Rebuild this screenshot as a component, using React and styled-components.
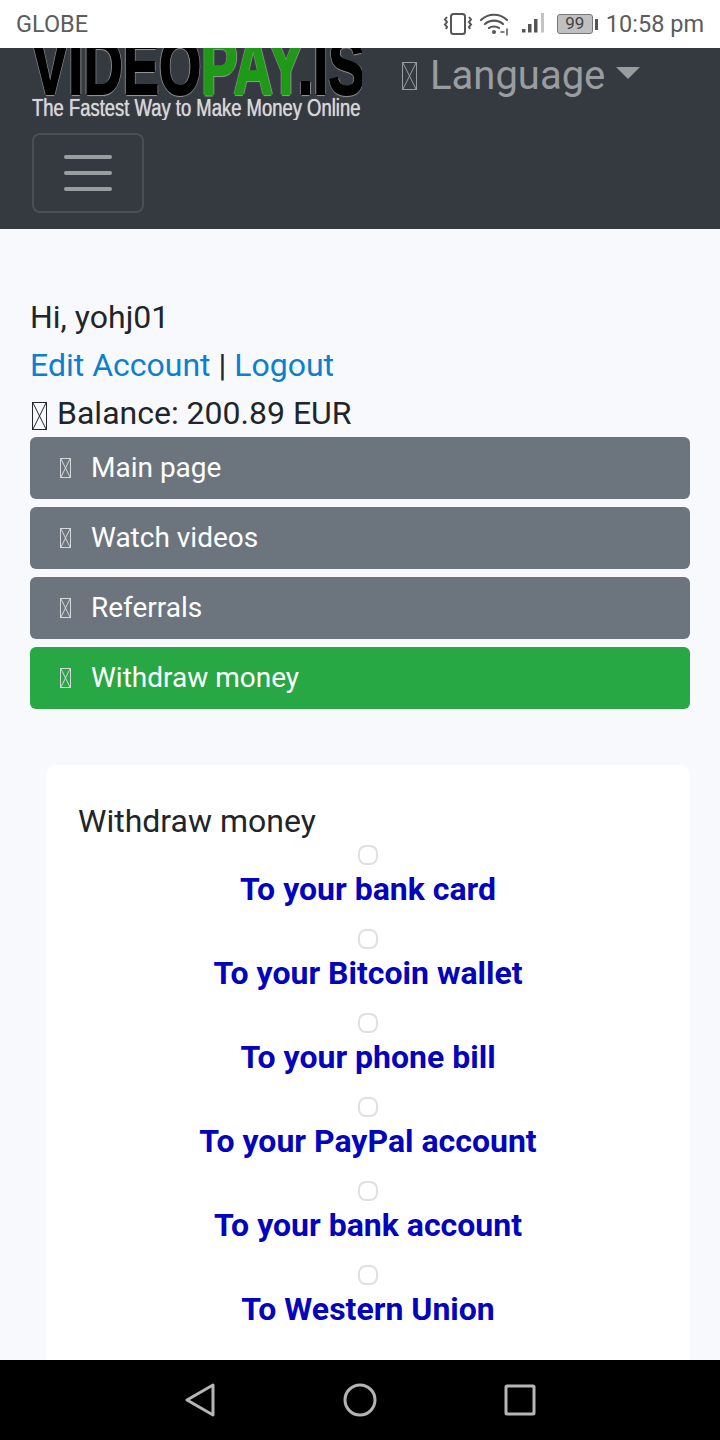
import React from "react";
import styled, { createGlobalStyle } from "styled-components";

const GlobalStyle = createGlobalStyle`
  html, body { margin: 0; padding: 0; background: #000; }
  * { box-sizing: border-box; }
`;

const menuItems = [
  { label: "Main page" },
  { label: "Watch videos" },
  { label: "Referrals" },
  { label: "Withdraw money", active: true },
];

const withdrawOptions = [
  "To your bank card",
  "To your Bitcoin wallet",
  "To your phone bill",
  "To your PayPal account",
  "To your bank account",
  "To Western Union",
];

// missing-glyph box, the icon font did not load in the original
const Tofu = ({ w, h, color }) => (
  <svg width={w} height={h} viewBox={`0 0 ${w} ${h}`} fill="none" stroke={color} strokeWidth="1">
    <rect x="0.5" y="0.5" width={w - 1} height={h - 1} />
    <path d={`M1 1L${w - 1} ${h - 1}M${w - 1} 1L1 ${h - 1}`} />
  </svg>
);

const App = () => (
  <Screen>
    <GlobalStyle />
    <StatusBar>
      <Carrier>GLOBE</Carrier>
      <StatusRight>
        <svg width="30" height="24" viewBox="0 0 30 24" fill="none" stroke="#555" strokeWidth="2">
          <rect x="8" y="2" width="14" height="20" rx="2.5" />
          <path d="M4 5l-2 2.500 2 2.500-2 2.500 2 2.500 -1 2M26 5l2 2.500-2 2.500 2 2.500-2 2.500 1 2" strokeWidth="2" />
        </svg>
        <svg width="32" height="24" viewBox="0 0 32 24" fill="none" stroke="#555" strokeWidth="2.200" strokeLinecap="round">
          <path d="M2 8C9 1 21 1 28 8M6 12c5-4.500 13-4.500 18 0M10 16c2.500-2 7.500-2 10 0" />
          <circle cx="15" cy="20" r="2" fill="#555" stroke="none" />
          <path d="M22 20h3M28 17v6" strokeWidth="1.500" />
        </svg>
        <SignalIcon width="24" height="24" viewBox="0 0 24 24" fill="#555">
          <rect x="1" y="17" width="3.500" height="3.500" />
          <rect x="7" y="12" width="3.500" height="8.500" />
          <rect x="13" y="7" width="3.500" height="13.500" />
          <rect x="20" y="1" width="3" height="19.500" fill="#c4c4c4" />
        </SignalIcon>
        <Battery>
          <BatteryBody>99</BatteryBody>
          <BatteryTip />
        </Battery>
        <Clock>10:58 pm</Clock>
      </StatusRight>
    </StatusBar>

    <Main>
      <Navbar>
        <NavTop>
          <Logo>
            <LogoWord>
              VIDEO<LogoGreen>PAY</LogoGreen>.IS
            </LogoWord>
            <LogoTagline>The Fastest Way to Make Money Online</LogoTagline>
          </Logo>
          <LanguageLink>
            <Tofu w={15} h={28} color="#9a9da0" />
            <span>Language</span>
            <Caret />
          </LanguageLink>
        </NavTop>
        <Toggler>
          <TogglerBar />
          <TogglerBar />
          <TogglerBar />
        </Toggler>
      </Navbar>

      <Content>
        <InfoLine>Hi, yohj01</InfoLine>
        <InfoLine>
          <AccountLink>Edit Account</AccountLink> | <AccountLink>Logout</AccountLink>
        </InfoLine>
        <InfoLine>
          <BalanceIcon>
            <Tofu w={15} h={28} color="#212529" />
          </BalanceIcon>
          Balance: 200.89 EUR
        </InfoLine>

        <Menu>
          {menuItems.map((item) => (
            <MenuButton key={item.label} $active={item.active}>
              <MenuIcon>
                <Tofu w={11} h={20} color="#d5d8da" />
              </MenuIcon>
              {item.label}
            </MenuButton>
          ))}
        </Menu>

        <Card>
          <CardTitle>Withdraw money</CardTitle>
          <OptionList>
            {withdrawOptions.map((option) => (
              <Option key={option}>
                <RadioCircle />
                <OptionLabel>{option}</OptionLabel>
              </Option>
            ))}
          </OptionList>
        </Card>
      </Content>
    </Main>

    <NavBar>
      <svg width="32" height="34" viewBox="0 0 32 34" fill="none" stroke="#b5b5b5" strokeWidth="3" strokeLinejoin="round">
        <path d="M29 2L3 17l26 15z" />
      </svg>
      <svg width="34" height="34" viewBox="0 0 34 34" fill="none" stroke="#b5b5b5" strokeWidth="3">
        <circle cx="17" cy="17" r="15" />
      </svg>
      <svg width="32" height="32" viewBox="0 0 32 32" fill="none" stroke="#b5b5b5" strokeWidth="3" strokeLinejoin="round">
        <rect x="2" y="2" width="28" height="28" rx="1" />
      </svg>
    </NavBar>
  </Screen>
);

export default App;

const Screen = styled.div`
  width: 720px;
  height: 1440px;
  display: flex;
  flex-direction: column;
  overflow: hidden;
  font-family: Roboto, "Liberation Sans", sans-serif;
  background: #f8f9fc;
`;

const StatusBar = styled.div`
  height: 48px;
  flex-shrink: 0;
  background: #fff;
  display: flex;
  align-items: center;
  justify-content: space-between;
  padding: 0 16px;
  color: #5c5c5c;
  font-size: 23.5px;
`;

const Carrier = styled.span``;

const StatusRight = styled.div`
  display: flex;
  align-items: center;
  gap: 6px;
`;

const SignalIcon = styled.svg`
  margin-left: 4px;
`;

const Battery = styled.div`
  display: flex;
  align-items: center;
  gap: 2px;
  margin-left: 6px;
`;

const BatteryBody = styled.div`
  width: 36px;
  height: 20px;
  border: 1.5px solid #777;
  border-radius: 3px;
  background: #c0c0c0;
  color: #444;
  font-size: 17px;
  line-height: 17px;
  text-align: center;
`;

const BatteryTip = styled.div`
  width: 3px;
  height: 11px;
  background: #555;
`;

const Clock = styled.span`
  margin-left: 2px;
`;

const Main = styled.div`
  flex: 1;
  min-height: 0;
  overflow: hidden;
`;

const Navbar = styled.div`
  height: 181px;
  background: #343a40;
  padding: 0 32px;
`;

const NavTop = styled.div`
  height: 85px;
  display: flex;
  align-items: flex-start;
  gap: 40px;
`;

const Logo = styled.div`
  width: 330px;
  height: 72px;
  position: relative;
  overflow: hidden;
`;

const LogoWord = styled.div`
  position: absolute;
  left: 0;
  top: -21px;
  font-family: "Liberation Sans", sans-serif;
  font-weight: 700;
  font-size: 80px;
  line-height: 80px;
  color: #000;
  white-space: nowrap;
  transform: scaleX(0.68);
  transform-origin: left top;
  -webkit-text-stroke: 2px #000;
  text-shadow: 2px 0 1px #999, -2px 0 1px #999, 0 2px 1px #999;
`;

const LogoGreen = styled.span`
  color: #1f9a17;
  -webkit-text-stroke: 2px #1f9a17;
`;

const LogoTagline = styled.div`
  position: absolute;
  left: 0;
  bottom: 0;
  font-family: "Liberation Sans", sans-serif;
  font-size: 23.5px;
  line-height: 24px;
  color: #d6d6d6;
  white-space: nowrap;
  transform: scaleX(0.785);
  transform-origin: left bottom;
  text-shadow: 0 0 1px #d6d6d6;
`;

const LanguageLink = styled.div`
  display: flex;
  align-items: center;
  gap: 13px;
  margin-top: 8px;
  font-size: 40px;
  line-height: 40px;
  color: #9a9da0;
`;

const Caret = styled.span`
  width: 0;
  height: 0;
  margin-left: -2px;
  margin-bottom: 6px;
  border-top: 12px solid #9a9da0;
  border-left: 12px solid transparent;
  border-right: 12px solid transparent;
`;

const Toggler = styled.div`
  width: 112px;
  height: 80px;
  border: 2px solid #4a4f55;
  border-radius: 8px;
  display: flex;
  flex-direction: column;
  align-items: center;
  justify-content: center;
  gap: 12px;
`;

const TogglerBar = styled.span`
  width: 48px;
  height: 4px;
  border-radius: 2px;
  background: #9a9da0;
`;

const Content = styled.div`
  padding: 64px 30px 0;
`;

const InfoLine = styled.div`
  font-size: 32px;
  line-height: 48px;
  color: #212529;
`;

const AccountLink = styled.a`
  color: #0d7fcf;
`;

const BalanceIcon = styled.span`
  display: inline-block;
  margin: 0 10px 0 2px;
  vertical-align: -6px;
  line-height: 0;
`;

const Menu = styled.div`
  display: flex;
  flex-direction: column;
  gap: 8px;
`;

const MenuButton = styled.div`
  height: 62px;
  border-radius: 6px;
  display: flex;
  align-items: center;
  padding: 0 0 2px 30px;
  font-size: 28px;
  color: #fff;
  background: ${(props) => (props.$active ? "#28a745" : "#6c757d")};
`;

const MenuIcon = styled.span`
  display: inline-flex;
  margin: 2px 20px 0 0;
`;

const Card = styled.div`
  margin: 56px 0 0 16px;
  background: #fff;
  border-radius: 10px;
  padding: 32px 32px 40px;
`;

const CardTitle = styled.div`
  font-size: 32px;
  line-height: 48px;
  color: #212529;
`;

const OptionList = styled.div`
  display: flex;
  flex-direction: column;
`;

const Option = styled.div`
  height: 84px;
  display: flex;
  flex-direction: column;
  align-items: center;
`;

const RadioCircle = styled.span`
  width: 20px;
  height: 20px;
  flex-shrink: 0;
  border: 2px solid #e0e0e0;
  border-radius: 8px;
  background: #fff;
`;

const OptionLabel = styled.div`
  margin-top: 2px;
  font-size: 32px;
  line-height: 44px;
  font-weight: 700;
  color: #0404bc;
`;

const NavBar = styled.div`
  height: 80px;
  flex-shrink: 0;
  background: #000;
  display: flex;
  align-items: center;
  justify-content: center;
  gap: 127px;
`;
